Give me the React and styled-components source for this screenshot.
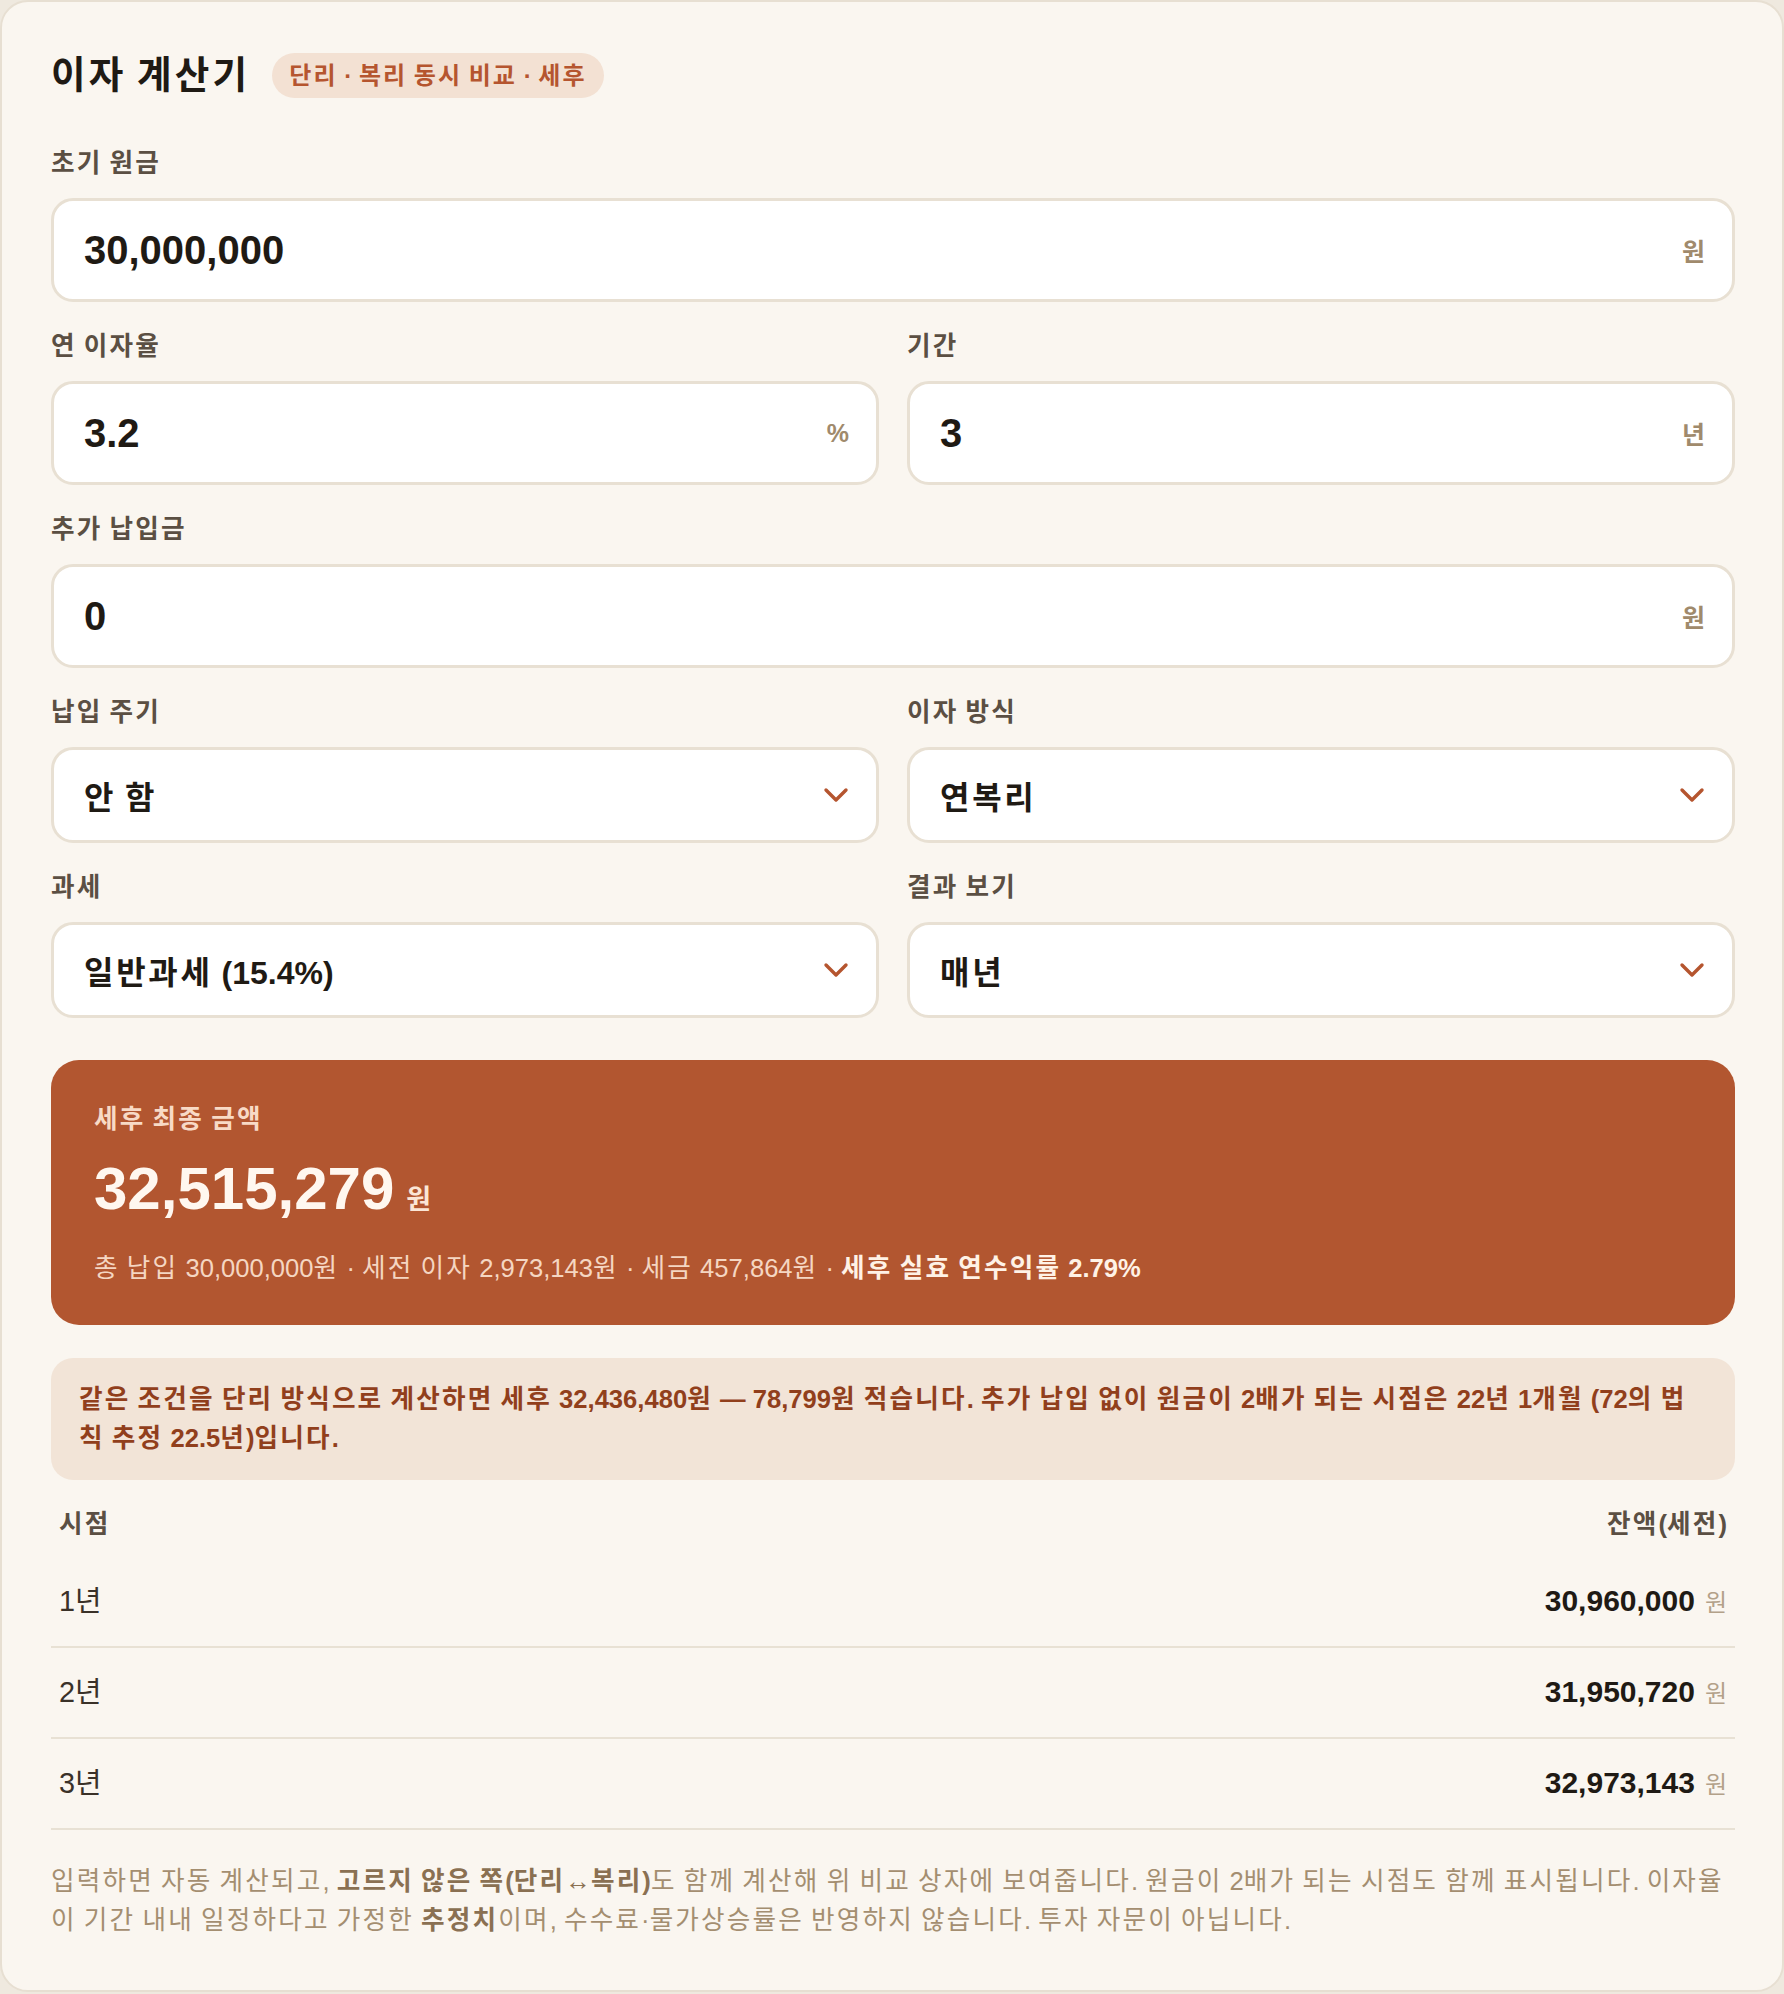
import React from 'react';
import styled, { createGlobalStyle } from 'styled-components';

const GlobalStyle = createGlobalStyle`
  * {
    box-sizing: border-box;
  }
  body {
    margin: 0;
    background: #efe9df;
    font-family: 'Liberation Sans', 'Noto Sans CJK KR', sans-serif;
    color: #1f1a14;
  }
`;

// Hangul in the design sits on full-width cells; the installed CJK face is a bit narrower
const Hangul = styled.span`
  letter-spacing: 0.085em;
`;

const ko = (text) =>
  text.split(/([가-힣]+)/).map((part, i) =>
    /[가-힣]/.test(part) ? <Hangul key={i}>{part}</Hangul> : part
  );

const Card = styled.main`
  background: #faf6f0;
  border: 2px solid #e7dfd2;
  border-radius: 28px;
  padding: 50px 47px 50px 49px;
`;

const Header = styled.header`
  display: flex;
  align-items: center;
  gap: 22px;
  margin-bottom: 50px;
`;

const Title = styled.h1`
  margin: 0;
  font-size: 37.6px;
  line-height: 46px;
  font-weight: 700;
  color: #1f1a14;
`;

const Badge = styled.span`
  display: inline-block;
  padding: 8px 17px;
  border-radius: 999px;
  background: #f3e1d3;
  color: #b5552f;
  font-size: 24px;
  line-height: 29px;
  font-weight: 600;
`;

const Form = styled.section`
  display: grid;
  grid-template-columns: 1fr 1fr;
  column-gap: 28px;
  row-gap: 29px;
`;

const Field = styled.div`
  grid-column: ${(p) => (p.$full ? '1 / -1' : 'auto')};
  display: flex;
  flex-direction: column;
`;

const Label = styled.label`
  font-size: 25.6px;
  line-height: 31px;
  font-weight: 600;
  color: #5b4f43;
  margin-bottom: 19px;
`;

const InputBox = styled.div`
  display: flex;
  align-items: center;
  height: ${(p) => (p.$select ? '96px' : '104px')};
  padding: 0 27px 0 30px;
  background: #ffffff;
  border: 3px solid #e8e0d3;
  border-radius: 22px;
`;

const ValueInput = styled.input`
  flex: 1;
  min-width: 0;
  border: none;
  outline: none;
  background: transparent;
  padding: 0;
  font-family: inherit;
  font-size: 40px;
  font-weight: 700;
  color: #1f1a14;
`;

const Suffix = styled.span`
  font-size: 25px;
  font-weight: 600;
  color: #a08a6c;
`;

const SelectValue = styled.span`
  flex: 1;
  font-size: 32px;
  font-weight: 700;
  color: #1f1a14;
`;

const Chevron = () => (
  <svg width="26" height="16" viewBox="0 0 26 16" fill="none">
    <polyline
      points="3,3 13,13 23,3"
      stroke="#b5552f"
      strokeWidth="3.4"
      strokeLinecap="round"
      strokeLinejoin="round"
    />
  </svg>
);

const Result = styled.section`
  margin-top: 42px;
  background: #b25630;
  border-radius: 28px;
  padding: 44px 43px 38px;
`;

const ResultLabel = styled.div`
  font-size: 25.6px;
  line-height: 31px;
  font-weight: 700;
  color: #f8dac6;
`;

const BigAmount = styled.div`
  margin-top: 17px;
  display: flex;
  align-items: baseline;
  font-size: 60px;
  line-height: 73px;
  font-weight: 700;
  color: #fff7ef;
`;

const BigUnit = styled.span`
  margin-left: 12px;
  font-size: 27px;
  font-weight: 700;
  color: #fbe6d6;
`;

const Summary = styled.p`
  margin: 12px 0 0;
  font-size: 25.6px;
  line-height: 38px;
  color: #f5d6c2;
  strong {
    color: #fff2e6;
    font-weight: 700;
  }
`;

const Note = styled.p`
  margin: 33px 0 0;
  padding: 22px 28px;
  background: #f2e4d7;
  border-radius: 22px;
  font-size: 25.6px;
  line-height: 39px;
  font-weight: 700;
  color: #913f1c;
`;

const Table = styled.table`
  width: 100%;
  margin-top: 5px;
  border-collapse: collapse;
`;

const Th = styled.th`
  height: 72px;
  padding: 0 8px;
  font-size: 25.6px;
  font-weight: 600;
  color: #5b4f43;
  text-align: ${(p) => (p.$right ? 'right' : 'left')};
`;

const Td = styled.td`
  padding: 23px 8px;
  line-height: 43px;
  font-size: 28.8px;
  border-bottom: 2px solid #e8e1d4;
  text-align: ${(p) => (p.$right ? 'right' : 'left')};
  color: #3a3128;
`;

const Money = styled.strong`
  font-size: 30px;
  line-height: 1;
  font-weight: 700;
  color: #1f1a14;
`;

const Won = styled.span`
  margin-left: 10px;
  font-size: 24px;
  line-height: 1;
  color: #b3a189;
`;

const Footer = styled.p`
  margin: 32px 0 0;
  font-size: 25.6px;
  line-height: 39px;
  color: #a48e70;
  strong {
    color: #8a7052;
    font-weight: 700;
  }
`;

function TextField({ label, value, suffix, full }) {
  return (
    <Field $full={full}>
      <Label>{ko(label)}</Label>
      <InputBox>
        <ValueInput defaultValue={value} />
        <Suffix>{suffix}</Suffix>
      </InputBox>
    </Field>
  );
}

function SelectField({ label, value }) {
  return (
    <Field>
      <Label>{ko(label)}</Label>
      <InputBox $select>
        <SelectValue>{ko(value)}</SelectValue>
        <Chevron />
      </InputBox>
    </Field>
  );
}

const rows = [
  { label: '1년', value: '30,960,000' },
  { label: '2년', value: '31,950,720' },
  { label: '3년', value: '32,973,143' },
];

export default function App() {
  return (
    <>
      <GlobalStyle />
      <Card>
        <Header>
          <Title>{ko('이자 계산기')}</Title>
          <Badge>{ko('단리 · 복리 동시 비교 · 세후')}</Badge>
        </Header>

        <Form>
          <TextField full label="초기 원금" value="30,000,000" suffix="원" />
          <TextField label="연 이자율" value="3.2" suffix="%" />
          <TextField label="기간" value="3" suffix="년" />
          <TextField full label="추가 납입금" value="0" suffix="원" />
          <SelectField label="납입 주기" value="안 함" />
          <SelectField label="이자 방식" value="연복리" />
          <SelectField label="과세" value="일반과세 (15.4%)" />
          <SelectField label="결과 보기" value="매년" />
        </Form>

        <Result>
          <ResultLabel>{ko('세후 최종 금액')}</ResultLabel>
          <BigAmount>
            32,515,279
            <BigUnit>원</BigUnit>
          </BigAmount>
          <Summary>
            {ko('총 납입 30,000,000원 · 세전 이자 2,973,143원 · 세금 457,864원 · ')}
            <strong>{ko('세후 실효 연수익률 2.79%')}</strong>
          </Summary>
        </Result>

        <Note>
          {ko(
            '같은 조건을 단리 방식으로 계산하면 세후 32,436,480원 — 78,799원 적습니다. 추가 납입 없이 원금이 2배가 되는 시점은 22년 1개월 (72의 법칙 추정 22.5년)입니다.'
          )}
        </Note>

        <Table>
          <thead>
            <tr>
              <Th>{ko('시점')}</Th>
              <Th $right>{ko('잔액(세전)')}</Th>
            </tr>
          </thead>
          <tbody>
            {rows.map((r) => (
              <tr key={r.label}>
                <Td>{ko(r.label)}</Td>
                <Td $right>
                  <Money>{r.value}</Money>
                  <Won>원</Won>
                </Td>
              </tr>
            ))}
          </tbody>
        </Table>

        <Footer>
          {ko('입력하면 자동 계산되고, ')}
          <strong>{ko('고르지 않은 쪽(단리↔복리)')}</strong>
          {ko(
            '도 함께 계산해 위 비교 상자에 보여줍니다. 원금이 2배가 되는 시점도 함께 표시됩니다. 이자율이 기간 내내 일정하다고 가정한 '
          )}
          <strong>{ko('추정치')}</strong>
          {ko('이며, 수수료·물가상승률은 반영하지 않습니다. 투자 자문이 아닙니다.')}
        </Footer>
      </Card>
    </>
  );
}
